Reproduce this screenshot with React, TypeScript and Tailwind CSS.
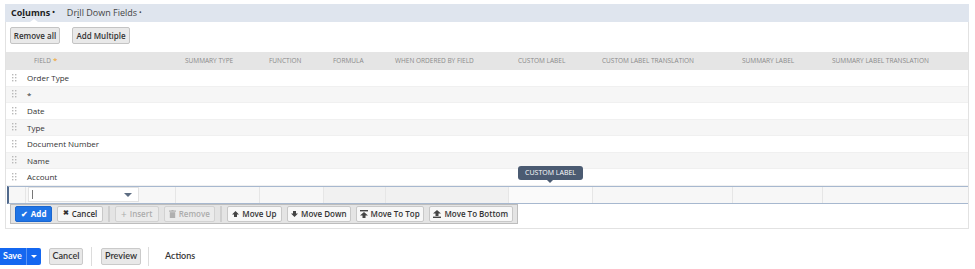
import React from "react";

const cols = [
  { w: "w-[20px]", label: "" },
  { w: "w-[150px]", label: "FIELD" },
  { w: "w-[84px]", label: "SUMMARY TYPE" },
  { w: "w-[64px]", label: "FUNCTION" },
  { w: "w-[62px]", label: "FORMULA" },
  { w: "w-[123px]", label: "WHEN ORDERED BY FIELD" },
  { w: "w-[84px]", label: "CUSTOM LABEL" },
  { w: "w-[140px]", label: "CUSTOM LABEL TRANSLATION" },
  { w: "w-[90px]", label: "SUMMARY LABEL" },
  { w: "w-[145px]", label: "SUMMARY LABEL TRANSLATION" },
];

const rows = ["Order Type", "*", "Date", "Type", "Document Number", "Name", "Account"];

function Handle() {
  return (
    <svg width="5" height="8" viewBox="0 0 5 8" className="block">
      {[0, 3, 6].map((y) =>
        [0, 3].map((x) => <rect key={`${x}-${y}`} x={x} y={y} width="1.4" height="1.4" fill="#b9b9b9" />)
      )}
    </svg>
  );
}

function TbBtn({
  w,
  children,
  disabled,
}: {
  w: string;
  children: React.ReactNode;
  disabled?: boolean;
}) {
  return (
    <div
      className={`${w} h-[16px] flex items-center justify-center gap-[3px] rounded-[2px] border text-[8px] font-semibold ${
        disabled
          ? "border-[#d2d2d2] bg-[#ebebeb] text-[#ababab]"
          : "border-[#c8c8c8] bg-[#f7f7f7] text-[#333]"
      }`}
    >
      {children}
    </div>
  );
}

function Sep() {
  return <div className="h-[16px] w-[2px] border-x border-[#cfcfcf] bg-[#f2f2f2]" />;
}

export default function App() {
  return (
    <div
      className="relative w-[975px] h-[269px] bg-white overflow-hidden"
      style={{ fontFamily: '"Open Sans", "Liberation Sans", sans-serif' }}
    >
      <div className="ml-[5px] pt-[4px] w-[964px]">
        {/* tab bar */}
        <div className="relative h-[18px] bg-[#dfe5ee] flex items-center text-[9px]">
          <div className="pl-[6px] pr-[6px] flex items-center text-[#222] font-bold">
            <span>
              Co<span className="underline">l</span>umns
            </span>
            <span className="ml-[2px] text-[7px]">•</span>
          </div>
          <div className="pl-[6px] flex items-center text-[#444]">
            <span>
              Dr<span className="underline">i</span>ll Down Fields
            </span>
            <span className="ml-[2px] text-[7px]">•</span>
          </div>
          <div className="absolute left-[25px] bottom-0 w-0 h-0 border-x-[4px] border-x-transparent border-b-[3px] border-b-white" />
        </div>

        {/* body */}
        <div className="border-x border-b border-[#e2e2e2] pb-[4px]">
          <div className="flex gap-[12px] pl-[4px] pt-[5px] pb-[8px]">
            <div className="h-[17px] w-[50px] flex items-center justify-center rounded-[2px] border border-[#c4c4c4] bg-[#e9e9e9] text-[8px] font-semibold text-[#333]">
              Remove all
            </div>
            <div className="h-[17px] w-[58px] flex items-center justify-center rounded-[2px] border border-[#c4c4c4] bg-[#e9e9e9] text-[8px] font-semibold text-[#333]">
              Add Multiple
            </div>
          </div>

          {/* header */}
          <div className="flex h-[18px] bg-[#e5e5e5] items-center text-[6.5px] text-[#8a8a8a]">
            {cols.map((c, i) => (
              <div key={i} className={`${c.w} ${i === 1 ? "pl-[8px]" : "pl-[9px]"} whitespace-nowrap`}>
                {c.label}
                {i === 1 && <span className="text-[#f0a020] ml-[2px] text-[8px] align-top leading-[8px]">*</span>}
              </div>
            ))}
          </div>

          {/* rows */}
          {rows.map((r, i) => (
            <div
              key={r}
              className={`flex items-center h-[16.5px] text-[8px] text-[#333] ${
                i % 2 === 1 ? "bg-[#f6f6f6]" : "bg-white"
              } border-b border-[#f0f0f0]`}
            >
              <div className="w-[21px] pl-[6px]">
                <Handle />
              </div>
              <div className="pt-px">{r}</div>
            </div>
          ))}

          {/* edit row */}
          <div className="ml-[1px] flex h-[18px] border-y border-[#a7b8cf] border-l-2 border-l-[#50698c] bg-[#f7f7f7]">
            <div className="w-[17px] border-r border-[#e6e6e6]" />
            <div className="w-[150px] border-r border-[#e6e6e6] flex items-center pl-[2px]">
              <div className="relative w-[111px] h-[15px] bg-white border border-[#e2e2e2]">
                <div className="absolute left-[3px] top-[2px] w-px h-[9px] bg-[#777]" />
                <div className="absolute right-[6px] top-[5px] w-0 h-0 border-x-[4px] border-x-transparent border-t-[4px] border-t-[#5d6d82]" />
              </div>
            </div>
            <div className="w-[84px] border-r border-[#e6e6e6]" />
            <div className="w-[64px] border-r border-[#e6e6e6]" />
            <div className="w-[62px] border-r border-[#e6e6e6] bg-[#f1f1f1]" />
            <div className="w-[123px] border-r border-[#e6e6e6] bg-[#f1f1f1]" />
            <div className="w-[84px] border-r border-[#e6e6e6] bg-[#fafafa]" />
            <div className="w-[140px] border-r border-[#e6e6e6]" />
            <div className="w-[90px] border-r border-[#e6e6e6]" />
            <div className="flex-1" />
          </div>

          {/* toolbar */}
          <div className="ml-[4px] w-[508px] h-[20px] flex items-center gap-[5px] px-[4px] bg-[#e4e4e4] border border-[#bdbdbd]">
            <div className="w-[38px] h-[16px] flex items-center justify-center gap-[3px] rounded-[2px] bg-[#1f74e6] border border-[#1a66cf] text-white text-[8px] font-bold">
              <span className="text-[8px]">✔</span>Add
            </div>
            <TbBtn w="w-[46px]">
              <span className="text-[7px]">✖</span>Cancel
            </TbBtn>
            <Sep />
            <TbBtn w="w-[45px]" disabled>
              <span className="text-[10px] font-normal leading-none">+</span>Insert
            </TbBtn>
            <TbBtn w="w-[52px]" disabled>
              <svg width="7" height="8" viewBox="0 0 7 8">
                <rect x="0" y="0.5" width="7" height="1.2" fill="#b0b0b0" />
                <rect x="2.5" y="0" width="2" height="1" fill="#b0b0b0" />
                <rect x="0.8" y="2.2" width="5.4" height="5.8" fill="#b0b0b0" />
              </svg>
              Remove
            </TbBtn>
            <Sep />
            <TbBtn w="w-[56px]">
              <svg width="7" height="6" viewBox="0 0 7 6">
                <path d="M3.5 0 L7 3.5 H5 V6 H2 V3.5 H0 Z" fill="#444" />
              </svg>
              Move Up
            </TbBtn>
            <TbBtn w="w-[65px]">
              <svg width="7" height="6" viewBox="0 0 7 6">
                <path d="M3.5 6 L7 2.5 H5 V0 H2 V2.5 H0 Z" fill="#444" />
              </svg>
              Move Down
            </TbBtn>
            <TbBtn w="w-[69px]">
              <svg width="8" height="8" viewBox="0 0 8 8">
                <rect x="0" y="0" width="8" height="1.4" fill="#444" />
                <path d="M4 2 L8 5.5 H5.5 V8 H2.5 V5.5 H0 Z" fill="#444" />
              </svg>
              Move To Top
            </TbBtn>
            <TbBtn w="w-[86px]">
              <svg width="8" height="8" viewBox="0 0 8 8">
                <path d="M4 0 L8 3.5 H5.5 V6 H2.5 V3.5 H0 Z" fill="#444" />
                <rect x="0" y="6.6" width="8" height="1.4" fill="#444" />
              </svg>
              Move To Bottom
            </TbBtn>
          </div>
        </div>
      </div>

      {/* tooltip */}
      <div className="absolute left-[518px] top-[166px] w-[65px] h-[14px] rounded-[3px] bg-[#4b5b72] flex items-center justify-center text-white text-[7px]">
        CUSTOM LABEL
        <div className="absolute left-[29px] -bottom-[3px] w-0 h-0 border-x-[3px] border-x-transparent border-t-[3px] border-t-[#4b5b72]" />
      </div>

      {/* bottom bar */}
      <div
        className="absolute left-0 top-[246px] flex items-center h-[20px] text-[9px]"
        style={{ fontFamily: 'Lato, "Liberation Sans", sans-serif' }}
      >
        <div className="flex h-[17px] rounded-r-[2px] overflow-hidden">
          <div className="w-[26px] bg-[#1467f0] text-white font-bold flex items-center pl-[3px]">Save</div>
          <div className="w-[15px] bg-[#1467f0] border-l border-[#5b95f5] flex items-center justify-center">
            <div className="w-0 h-0 border-x-[3px] border-x-transparent border-t-[3px] border-t-white" />
          </div>
        </div>
        <div className="ml-[8px] w-[34px] h-[17px] rounded-[2px] border border-[#cacaca] bg-[#e8e8e8] flex items-center justify-center font-semibold text-[#333]">
          Cancel
        </div>
        <div className="ml-[8px] w-px h-[19px] bg-[#dcdcdc]" />
        <div className="ml-[9px] w-[40px] h-[17px] rounded-[2px] border border-[#cacaca] bg-[#e8e8e8] flex items-center justify-center font-semibold text-[#333]">
          Preview
        </div>
        <div className="ml-[7px] w-px h-[19px] bg-[#dcdcdc]" />
        <div className="ml-[16px] text-[#333] font-semibold">Actions</div>
      </div>
    </div>
  );
}
